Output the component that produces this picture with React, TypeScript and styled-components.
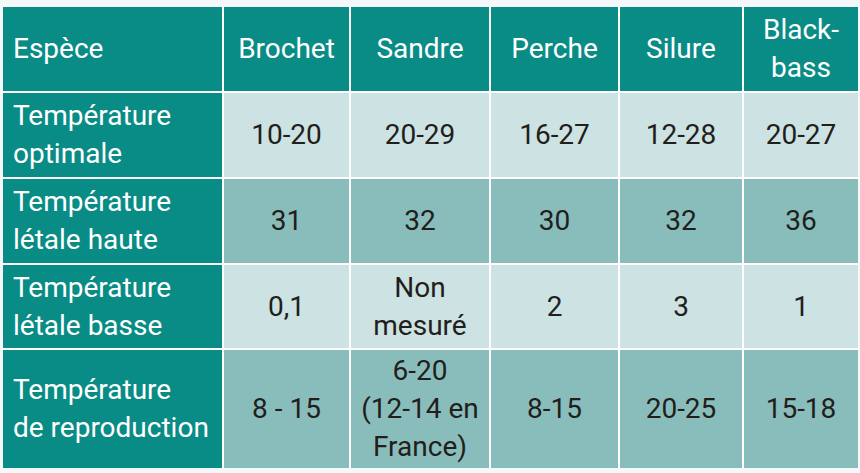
import styled, { createGlobalStyle } from "styled-components";

const GlobalStyle = createGlobalStyle`
  html, body {
    margin: 0;
    background: #f5f8f8;
  }
`;

type Tone = "head" | "light" | "mid";

const tones: Record<Tone, string> = {
  head: "#0a8c86",
  light: "#cde2e2",
  mid: "#89bdbb",
};

const Page = styled.div`
  padding: 7px 2px 0 3px;
  font-family: Roboto, "Noto Sans", sans-serif;
`;

const Grid = styled.div`
  display: grid;
  grid-template-columns: 219px 125px 138px 127px 122px 114px;
  grid-template-rows: 84px 84px 84px 83px 118px;
  gap: 2px;
  background: #ffffff;
  width: 855px;
`;

const Cell = styled.div<{ $tone: Tone; $label?: boolean }>`
  display: flex;
  align-items: center;
  justify-content: ${(p) => (p.$label ? "flex-start" : "center")};
  text-align: ${(p) => (p.$label ? "left" : "center")};
  padding: ${(p) => (p.$label ? "0 0 0 10px" : "0 2px")};
  background: ${(p) => tones[p.$tone]};
  color: ${(p) => (p.$tone === "head" ? "#ffffff" : "#221e1b")};
  font-size: 28px;
  line-height: 38px;
  white-space: nowrap;
`;

const species = ["Brochet", "Sandre", "Perche", "Silure", "Black-\nbass"];

const rows: { label: string; tone: Tone; values: string[] }[] = [
  {
    label: "Température\noptimale",
    tone: "light",
    values: ["10-20", "20-29", "16-27", "12-28", "20-27"],
  },
  {
    label: "Température\nlétale haute",
    tone: "mid",
    values: ["31", "32", "30", "32", "36"],
  },
  {
    label: "Température\nlétale basse",
    tone: "light",
    values: ["0,1", "Non\nmesuré", "2", "3", "1"],
  },
  {
    label: "Température\nde reproduction",
    tone: "mid",
    values: ["8 - 15", "6-20\n(12-14 en\nFrance)", "8-15", "20-25", "15-18"],
  },
];

const Lines = ({ text }: { text: string }) => (
  <span>
    {text.split("\n").map((line, i) => (
      <span key={i}>
        {i > 0 && <br />}
        {line}
      </span>
    ))}
  </span>
);

export default function App() {
  return (
    <Page>
      <GlobalStyle />
      <Grid>
        <Cell $tone="head" $label>
          Espèce
        </Cell>
        {species.map((s) => (
          <Cell key={s} $tone="head">
            <Lines text={s} />
          </Cell>
        ))}
        {rows.map((row) => [
          <Cell key={row.label} $tone="head" $label>
            <Lines text={row.label} />
          </Cell>,
          ...row.values.map((v, i) => (
            <Cell key={row.label + i} $tone={row.tone}>
              <Lines text={v} />
            </Cell>
          )),
        ])}
      </Grid>
    </Page>
  );
}
